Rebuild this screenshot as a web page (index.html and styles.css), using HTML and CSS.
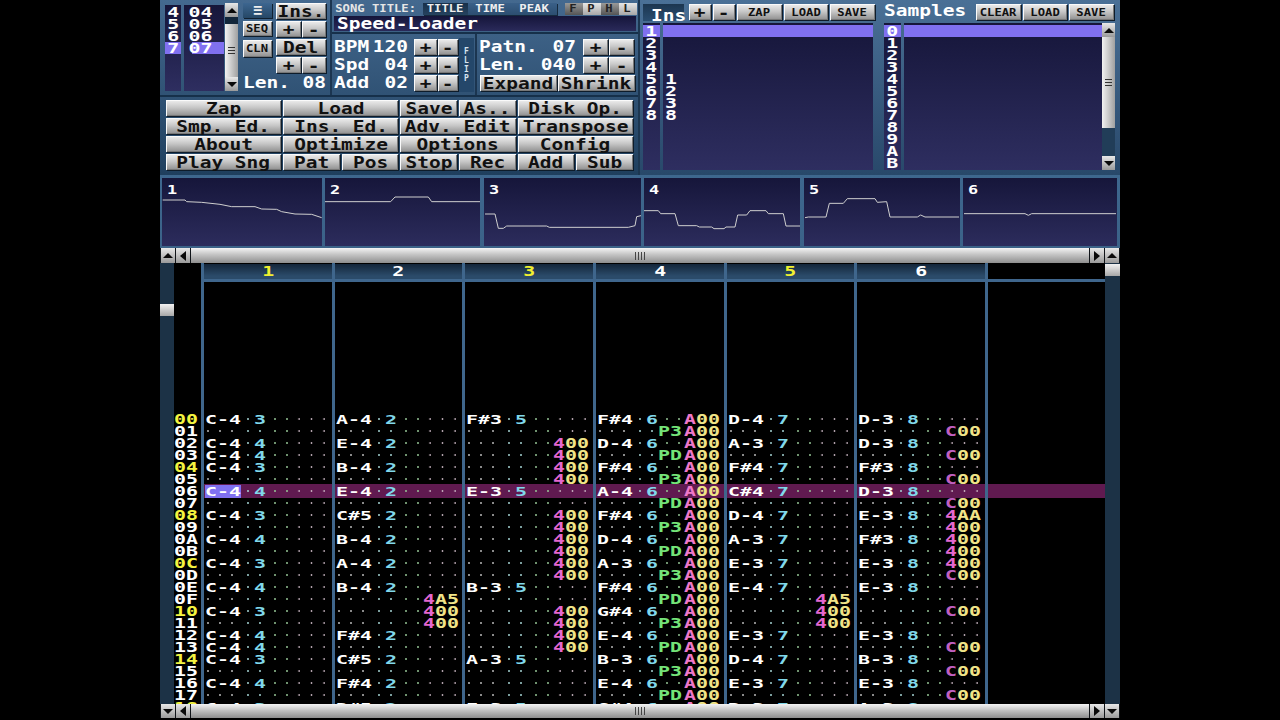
FILE: index.html
```html
<!DOCTYPE html>
<html lang="en">
<head>
<meta charset="utf-8">
<title>Speed-Loader</title>
<link rel="stylesheet" href="styles.css">
</head>
<body>
<div class="stage">
  <div class="top">
    <div class="left">
      <div class="upper">
        <div class="seq">
          <div class="list nums">
            <div class="li"><span class="t">4</span></div>
            <div class="li"><span class="t">5</span></div>
            <div class="li"><span class="t">6</span></div>
            <div class="li sel"><span class="t">7</span></div>
          </div>
          <div class="list names">
            <div class="li"><span class="t">04</span></div>
            <div class="li"><span class="t">05</span></div>
            <div class="li"><span class="t">06</span></div>
            <div class="li sel"><span class="t">07</span></div>
          </div>
          <div class="vbar">
            <div class="arrow"><i class="tri up"></i></div>
            <div class="gap7"></div>
            <div class="thumb"><i class="grip"></i></div>
            <div class="arrow"><i class="tri down"></i></div>
          </div>
          <div class="seqright">
            <div class="seqgrid">
              <div class="seqsmall">
                <div class="bb menu">≡</div>
                <div class="b smallb"><span class="t s">SEQ</span></div>
                <div class="b smallb cln"><span class="t s">CLN</span></div>
              </div>
              <div class="seqins">
                <div class="b"><span class="t">Ins.</span></div>
                <div class="pm"><div class="b"><span class="t">+</span></div><div class="b"><span class="t">-</span></div></div>
                <div class="b"><span class="t">Del</span></div>
                <div class="pm"><div class="b"><span class="t">+</span></div><div class="b"><span class="t">-</span></div></div>
              </div>
            </div>
            <div class="lenrow"><span class="t l lab">Len.</span><span class="t r val">08</span></div>
          </div>
        </div>
        <div class="mid">
          <div class="titlebar">
            <div class="titletop">
              <span class="t s l songlab">SONG TITLE:</span>
              <div class="tab on"><span class="t s">TITLE</span></div>
              <div class="tab"><span class="t s">TIME</span></div>
              <div class="tab"><span class="t s">PEAK</span></div>
              <div class="flags">
                <div class="flag off"><span class="t s">F</span></div>
                <div class="flag"><span class="t s">P</span></div>
                <div class="flag off"><span class="t s">H</span></div>
                <div class="flag"><span class="t s">L</span></div>
              </div>
            </div>
            <div class="titleinput"><span class="t l">Speed-Loader</span></div>
          </div>
          <div class="params">
            <div class="bpm">
              <div class="prow"><span class="t l lab3">BPM</span><span class="t r val3">120</span><div class="pm2"><div class="b"><span class="t">+</span></div><div class="b"><span class="t">-</span></div></div></div>
              <div class="prow"><span class="t l lab3">Spd</span><span class="t r val3">04</span><div class="pm2"><div class="b"><span class="t">+</span></div><div class="b"><span class="t">-</span></div></div></div>
              <div class="prow"><span class="t l lab3">Add</span><span class="t r val3">02</span><div class="pm2"><div class="b"><span class="t">+</span></div><div class="b"><span class="t">-</span></div></div></div>
            </div>
            <div class="flip"><span>F</span><span>L</span><span>I</span><span>P</span></div>
            <div class="patn">
              <div class="prow"><span class="t l lab5">Patn.</span><span class="t r val5">07</span><div class="pm3"><div class="b"><span class="t">+</span></div><div class="b"><span class="t">-</span></div></div></div>
              <div class="prow"><span class="t l lab5">Len.</span><span class="t r val5">040</span><div class="pm3"><div class="b"><span class="t">+</span></div><div class="b"><span class="t">-</span></div></div></div>
              <div class="prow exp"><div class="b"><span class="t">Expand</span></div><div class="b"><span class="t">Shrink</span></div></div>
            </div>
          </div>
        </div>
      </div>
      <div class="transport">
        <div class="b c2"><span class="t">Zap</span></div>
        <div class="b c2"><span class="t">Load</span></div>
        <div class="b"><span class="t">Save</span></div>
        <div class="b"><span class="t">As..</span></div>
        <div class="b c2"><span class="t">Disk Op.</span></div>
        <div class="b c2"><span class="t">Smp. Ed.</span></div>
        <div class="b c2"><span class="t">Ins. Ed.</span></div>
        <div class="b c2"><span class="t">Adv. Edit</span></div>
        <div class="b c2"><span class="t">Transpose</span></div>
        <div class="b c2"><span class="t">About</span></div>
        <div class="b c2"><span class="t">Optimize</span></div>
        <div class="b c2"><span class="t">Options</span></div>
        <div class="b c2"><span class="t">Config</span></div>
        <div class="b c2"><span class="t">Play Sng</span></div>
        <div class="b"><span class="t">Pat</span></div>
        <div class="b"><span class="t">Pos</span></div>
        <div class="b"><span class="t">Stop</span></div>
        <div class="b"><span class="t">Rec</span></div>
        <div class="b"><span class="t">Add</span></div>
        <div class="b"><span class="t">Sub</span></div>
      </div>
    </div>
    <div class="right">
      <div class="bank inst">
        <div class="bankhead">
          <div class="instab"><span class="t l">Ins</span></div>
          <div class="b hb pmw"><span class="t">+</span></div>
          <div class="b hb pmw"><span class="t">-</span></div>
          <div class="b hb txw"><span class="t s">ZAP</span></div>
          <div class="b hb txw"><span class="t s">LOAD</span></div>
          <div class="b hb txw"><span class="t s">SAVE</span></div>
        </div>
        <div class="banklists">
          <div class="list bnum">
            <div class="li sel"><span class="t">1</span></div><div class="li"><span class="t">2</span></div><div class="li"><span class="t">3</span></div><div class="li"><span class="t">4</span></div><div class="li"><span class="t">5</span></div><div class="li"><span class="t">6</span></div><div class="li"><span class="t">7</span></div><div class="li"><span class="t">8</span></div>
          </div>
          <div class="list bname">
            <div class="li sel"></div><div class="li"></div><div class="li"></div><div class="li"></div><div class="li"><span class="t l">1</span></div><div class="li"><span class="t l">2</span></div><div class="li"><span class="t l">3</span></div><div class="li"><span class="t l">8</span></div>
          </div>
        </div>
      </div>
      <div class="bank samp">
        <div class="bankhead">
          <div class="samptitle"><span class="t l">Samples</span></div>
          <div class="b hb txw"><span class="t s">CLEAR</span></div>
          <div class="b hb txw"><span class="t s">LOAD</span></div>
          <div class="b hb txw"><span class="t s">SAVE</span></div>
        </div>
        <div class="banklists">
          <div class="list bnum">
            <div class="li sel"><span class="t">0</span></div><div class="li"><span class="t">1</span></div><div class="li"><span class="t">2</span></div><div class="li"><span class="t">3</span></div><div class="li"><span class="t">4</span></div><div class="li"><span class="t">5</span></div><div class="li"><span class="t">6</span></div><div class="li"><span class="t">7</span></div><div class="li"><span class="t">8</span></div><div class="li"><span class="t">9</span></div><div class="li"><span class="t">A</span></div><div class="li"><span class="t">B</span></div>
          </div>
          <div class="list bname wide"><div class="li sel"></div></div>
          <div class="vbar tall">
            <div class="arrow"><i class="tri up"></i></div>
            <div class="thumb big"><i class="grip"></i></div>
            <div class="gapfill"></div>
            <div class="arrow"><i class="tri down"></i></div>
          </div>
        </div>
      </div>
    </div>
  </div>

  <div class="scopes">
    <div class="scope"><span class="t l sn">1</span><svg class="wave" viewBox="6 9 480 204" preserveAspectRatio="none"><polyline points="8,75 75,75 80,80 125,82 180,88 215,95 285,95 305,102 350,103 365,110 405,117 455,118 485,128"/></svg></div>
    <div class="scope"><span class="t l sn">2</span><svg class="wave" viewBox="498 9 465 204" preserveAspectRatio="none"><polyline points="498,80 695,80 708,66 808,66 818,80 963,80"/></svg></div>
    <div class="scope"><span class="t l sn">3</span><svg class="wave" viewBox="972 9 471 204" preserveAspectRatio="none"><polyline points="975,117 1005,117 1015,160 1030,160 1040,153 1160,153 1168,157 1405,157 1425,152 1430,125 1443,122"/></svg></div>
    <div class="scope"><span class="t l sn">4</span><svg class="wave" viewBox="12 9 468 204" preserveAspectRatio="none"><polyline points="12,107 55,107 62,116 105,116 115,152 170,152 178,156 215,156 222,161 252,161 258,156 285,156 293,120 320,120 330,107 378,107 385,116 430,116 438,153 480,153"/></svg></div>
    <div class="scope"><span class="t l sn">5</span><svg class="wave" viewBox="492 9 468 204" preserveAspectRatio="none"><polyline points="495,128 505,126 558,126 568,85 610,85 622,71 705,71 712,82 740,80 750,126 832,126 842,120 855,126 957,126"/></svg></div>
    <div class="scope"><span class="t l sn">6</span><svg class="wave" viewBox="969 9 462 204" preserveAspectRatio="none"><polyline points="972,116 1155,116 1165,121 1175,116 1428,116"/></svg></div>
  </div>

  <div class="hbar">
    <div class="arrow"><i class="tri up"></i></div>
    <div class="arrow lr"><i class="tri left"></i></div>
    <div class="htrack"><i class="hgrip"></i></div>
    <div class="arrow lr"><i class="tri right"></i></div>
    <div class="arrow"><i class="tri up"></i></div>
  </div>

  <div class="pattern">
    <div class="sidebar lefts"><div class="sthumb"></div></div>
    <div class="grid" id="grid"></div>
    <div class="sidebar rights"><div class="sthumb first"></div></div>
  </div>

  <div class="hbar last">
    <div class="arrow"><i class="tri down"></i></div>
    <div class="arrow lr"><i class="tri left"></i></div>
    <div class="htrack"><i class="hgrip"></i></div>
    <div class="arrow lr"><i class="tri right"></i></div>
    <div class="arrow"><i class="tri down"></i></div>
  </div>
</div>
<script src="pattern.js"></script>
</body>
</html>
```
FILE: styles.css
```css
* { box-sizing: border-box; }
html, body { margin: 0; height: 100%; background: #000; overflow: hidden; }
.stage { width: 960px; height: 720px; margin: 0 auto; display: flex; flex-direction: column; color: #fff; font-family: "DejaVu Sans Mono", "Liberation Mono", monospace; }

/* text: the tracker's pixel font is wide, so a mono face is stretched */
.t { display: inline-block; font: bold 15px/12px "DejaVu Sans Mono", "Liberation Mono", monospace; transform: scaleX(1.3); white-space: pre; }
.t.s { font-size: 10px; line-height: 10px; transform: scaleX(1.22); }
.t.l { transform-origin: 0 50%; }
.t.r { transform-origin: 100% 50%; text-align: right; }

/* buttons */
.b { display: flex; align-items: center; justify-content: center; height: 16px; min-width: 0; padding-top: 1px; color: #111; background: linear-gradient(#efefef, #c9c9c9 45%, #8e8e8e); box-shadow: inset 1px 1px #fafafa, inset -1px -1px #777, 1px 1px #0e1c2a; }

/* top */
.top { height: 175px; display: flex; flex: none; }
.left { width: 480px; display: flex; flex-direction: column; background: linear-gradient(#44698f, #1f3f5e); border-right: 2px solid #1c3650; }
.right { width: 480px; display: flex; background: linear-gradient(#4a7096, #28486a); }
.upper { height: 97px; display: flex; border-bottom: 2px solid #16304a; }

.seq { width: 172px; display: flex; padding: 3px 0 0 5px; border-right: 2px solid #1b3550; }
.list { background: linear-gradient(#16163a, #2e2e60); }
.li { height: 12px; line-height: 12px; font-size: 14px; }
.li .t { font-size: 14px; transform: scaleX(1.42); }
.li.sel { background: #8070f0; }
.nums { width: 16px; height: 86px; margin-top: 2px; padding-top: 1px; text-align: center; }
.names { width: 40px; height: 86px; margin: 2px 1px 0 3px; padding-top: 1px; padding-left: 8px; }
.vbar { display: flex; flex-direction: column; width: 13px; height: 88px; background: #1e3a56; }
.arrow { flex: none; width: 14px; height: 14px; display: flex; align-items: center; justify-content: center; background: linear-gradient(#e8e8e8, #9a9a9a); }
.vbar .arrow { width: 13px; }
.tri { display: block; width: 0; height: 0; border-style: solid; border-color: transparent; }
.tri.up { border-width: 0 5px 5px; border-bottom-color: #0a0a0a; }
.tri.down { border-width: 5px 5px 0; border-top-color: #0a0a0a; }
.tri.left { border-width: 5px 6px 5px 0; border-right-color: #0a0a0a; }
.tri.right { border-width: 5px 0 5px 6px; border-left-color: #0a0a0a; }
.gap7 { height: 7px; flex: none; background: #12263a; }
.thumb { height: 53px; flex: none; display: flex; align-items: center; justify-content: center; background: linear-gradient(90deg, #f2f2f2, #a0a0a0); }
.thumb.big { height: 91px; }
.gapfill { flex: 1; background: #213d58; }
.grip { display: block; width: 7px; height: 7px; background: repeating-linear-gradient(#333 0 1px, transparent 1px 3px); }

.seqright { width: 83px; margin-left: 5px; display: flex; flex-direction: column; }
.seqgrid { display: flex; gap: 4px; height: 72px; }
.seqsmall { width: 29px; display: flex; flex-direction: column; }
.bb.menu { height: 15px; text-align: center; line-height: 15px; font-size: 15px; font-weight: bold; background: linear-gradient(#3d6690, #254766); box-shadow: 1px 1px #102030; color: #eee; margin-bottom: 3px; }
.smallb { height: 15px; margin-bottom: 4px; }
.smallb.cln { height: 17px; }
.seqins { width: 50px; display: flex; flex-direction: column; gap: 2px; }
.pm { display: flex; gap: 1px; }
.pm .b { width: 25px; }
.lenrow { display: flex; justify-content: space-between; height: 16px; align-items: center; }
.lab { width: 40px; }
.val { width: 20px; }

.mid { width: 306px; display: flex; flex-direction: column; }
.titlebar { height: 34px; padding: 3px 0 0 2px; border-bottom: 2px solid #16304a; }
.titletop { display: flex; height: 11px; align-items: center; }
.songlab { width: 89px; padding-left: 1px; color: #e6e6e6; }
.tab { width: 44.5px; height: 12px; display: flex; align-items: center; justify-content: center; background: linear-gradient(#3a6088, #2c4e70); box-shadow: 1px 1px #15293d; color: #eee; }
.tab.on { background: linear-gradient(#18304a, #25425f); }
.flags { display: flex; margin-left: 8px; }
.flag { width: 18px; height: 12px; display: flex; align-items: center; justify-content: center; color: #222; background: linear-gradient(#e6e6e6, #a8a8a8); }
.flag.off { background: linear-gradient(#999, #555); }
.titleinput { margin-top: 2px; width: 302px; height: 15px; padding: 2px 0 0 3px; line-height: 12px; font-size: 14px; background: linear-gradient(#15153a, #2a2a5a); }

.params { flex: 1; display: flex; }
.bpm { width: 127px; padding: 5px 0 0 2px; display: flex; flex-direction: column; gap: 2px; }
.prow { display: flex; height: 16px; align-items: center; }
.lab3 { width: 36px; }
.val3 { width: 38px; }
.pm2 { display: flex; gap: 1px; margin-left: 6px; }
.pm2 .b:first-child { width: 23px; }
.pm2 .b { width: 20px; }
.flip { width: 15px; margin: 4px 0 3px; display: flex; flex-direction: column; align-items: center; justify-content: center; gap: 2px; font-size: 8px; line-height: 7px; font-weight: bold; color: #d8e4f0; background: #24476a; }
.patn { flex: 1; margin-left: 1px; padding: 5px 0 0 2px; display: flex; flex-direction: column; gap: 2px; border-left: 2px solid #1b3550; }
.lab5 { width: 60px; }
.val5 { width: 37px; }
.pm3 { display: flex; gap: 1px; margin-left: 7px; }
.pm3 .b { width: 25px; }
.exp { gap: 1px; padding-left: 1px; }
.exp .b { width: 77px; }

.transport { padding: 3px 0 0 6px; display: grid; grid-template-columns: repeat(8, 56.6px); grid-auto-rows: 16px; gap: 2px; }
.c2 { grid-column: span 2; }

/* right */
.bank { display: flex; flex-direction: column; padding: 3px 0 0 3px; }
.inst { width: 241px; }
.samp { width: 239px; }
.bankhead { height: 18px; display: flex; gap: 2px; align-items: center; }
.instab { width: 41px; height: 17px; padding: 2px 0 0 8px; margin-right: 3px; background: linear-gradient(#1c3650, #2a4d70); }
.samptitle { width: 90px; padding-left: 0; margin-top: -4px; }
.hb { height: 16px; }
.pmw { width: 22px; }
.txw { width: 44.5px; }
.banklists { display: flex; margin-top: 2px; height: 147px; }
.bnum { width: 17px; padding-top: 2px; text-align: center; }
.bname { width: 210px; margin-left: 3px; padding-top: 2px; }
.bname .t.l { margin-left: 2px; }
.bname.wide { width: 198px; }
.vbar.tall { height: 147px; }

/* scopes */
.scopes { height: 73px; flex: none; display: grid; grid-template-columns: 160px 155px 157px 156px 156px 154px; gap: 3.4px; padding: 3px 0 2px 2px; background: linear-gradient(#3e678e, #3b6288); }
.scope { position: relative; background: linear-gradient(#16163a, #2c2c5c); }
.t.sn { position: absolute; left: 5px; top: 6px; font-size: 13px; transform: scaleX(1.3); }
.wave { position: absolute; left: 0; top: 0; width: 100%; height: 100%; }
.wave polyline { fill: none; stroke: #cfcfcf; stroke-width: 3; }

/* horizontal bars */
.hbar { height: 15px; flex: none; display: flex; background: #101418; }
.hbar .arrow { height: 15px; width: 14px; margin: 0 1px 0 1px; }
.hbar .lr { margin: 0; }
.htrack { flex: 1; margin: 0 1px; display: flex; align-items: center; justify-content: center; background: linear-gradient(#f4f4f4, #c8c8c8 40%, #8e8e8e); }
.hgrip { display: block; width: 11px; height: 8px; background: repeating-linear-gradient(90deg, #444 0 1px, transparent 1px 3px); }
.hbar.last { height: 14px; margin-bottom: 2px; }
.hbar.last .arrow { height: 14px; }

/* pattern */
.pattern { height: 441px; flex: none; display: flex; overflow: hidden; background: #000; }
.sidebar { flex: none; width: 14px; background: #1c3246; }
.rights { width: 15px; }
.sthumb { height: 12px; margin-top: 41px; background: linear-gradient(#f2f2f2, #a8a8a8); }
.sthumb.first { margin-top: 1px; }
.grid { flex: 1; display: flex; min-width: 0; }
.col { flex: none; width: 130.67px; border-left: 3px solid #3f668c; }
.col.numcol { width: 27px; border: 0; }
.col.rest { flex: 1; }
.head { height: 18px; margin-top: 1px; text-align: center; font-size: 14px; line-height: 12px; padding-top: 1px; background: linear-gradient(#14263a, #2b4b6a 80%); border-bottom: 3px solid #3f668c; }
.head .t { font-size: 14px; transform: scaleX(1.42); }
.head.odd .t { color: #f0f030; }
.rest .head { background: #000; }
.numcol .head { background: none; border: 0; }
.body { padding-top: 131px; }
.cell { height: 12px; display: flex; padding-left: 1px; font-size: 14px; line-height: 12px; }
.cell.hl { background: #601a50; box-shadow: 0 -1px #601a50, 0 1px #601a50; }
.numcol .cell { padding-left: 0; }
.num.y .t { color: #f4f440; }
.note, .ins, .vol, .fx { display: block; height: 12px; }
.note { width: 36px; }
.ins { width: 25px; }
.ins .t { margin-left: 13px; }
.vol { width: 25px; }
.fx { width: 37px; margin-left: 1px; }
.cur { background: #8070f0; box-shadow: 0 1px #8070f0; }
.d { background-image: radial-gradient(circle at 3px 6px, #bdbdbd .6px, transparent 1px); background-size: 12px 12px; background-repeat: repeat-x; }
.ins.d { background-image: radial-gradient(circle at 7px 6px, #a8d8d8 .6px, transparent 1px); }
.ins.one { background-repeat: no-repeat; }
.vol.d { background-image: radial-gradient(circle at 9px 6px, #98c898 .6px, transparent 1px); }
.fx.d { background-image: radial-gradient(circle at 7px 6px, #d4c0cc .6px, transparent 1px); background-size: 12.5px 12px; }
.note .t, .ins .t { font-size: 13px; transform-origin: 0 50%; transform: scaleX(1.53); }
.vol .t, .fx .t, .num .t { font-size: 14px; transform-origin: 0 50%; transform: scaleX(1.42); }
.ins .t { color: #80d8ea; }
.vol .t { color: #74e478; }
.fx .t b { font-weight: bold; color: #f0e488; }
.fx .t { color: #e468cf; }
.fx .t.cc { color: #c060c0; }
.fx .t.aa { color: #ee78c8; }
```
FILE: pattern.js
```js
// Pattern data, one string per channel: note+instrument, then volume column, then effect.
var channels = [
  'C-43,,C-44,C-44,C-43,,C-44,,C-43,,C-44,,C-43,,C-44,,C-43,,C-44,C-44,C-43,,C-44,,C-43',
  'A-42,,E-42,,B-42,,E-42,,C#52,,B-42,,A-42,,B-42,4A5,400,400,F#42,,C#52,,F#42,,D#52',
  'F#35,,400,400,400,400,E-35,,400,400,400,400,400,400,B-35,,400,400,400,400,A-35,,,,F-35',
  'F#46A00,P3A00,D-46A00,PDA00,F#46A00,P3A00,A-46A00,PDA00,F#46A00,P3A00,D-46A00,PDA00,A-36A00,P3A00,F#46A00,PDA00,G#46A00,P3A00,E-46A00,PDA00,B-36A00,P3A00,E-46A00,PDA00,G#46A00',
  'D-47,,A-37,,F#47,,C#47,,D-47,,A-37,,E-37,,E-47,4A5,400,400,E-37,,D-47,,E-37,,B-37',
  'D-38,C00,D-38,C00,F#38,C00,D-38,C00,E-384AA,400,F#38400,400,E-38400,C00,E-38,,C00,,E-38,C00,B-38,C00,E-38,C00,A-38'
];
var ROWS = 25, HL = 6;

function text(s, cls) { return '<span class="t' + (cls ? ' ' + cls : '') + '">' + s + '</span>'; }

function cell(src, row) {
  var note = '', ins = '', vol = '', fx = '', s = src;
  if (s.length >= 4 && (s[1] === '-' || s[1] === '#')) { note = s.slice(0, 3); ins = s[3]; s = s.slice(4); }
  if (s[0] === 'P') { vol = s.slice(0, 2); s = s.slice(2); }
  fx = s;
  var html = '<div class="' + (row === HL ? 'cell hl' : 'cell') + '">';
  html += note ? '<span class="note">' + text(note) + '</span>' : '<span class="note d"></span>';
  html += ins ? '<span class="ins d one">' + text(ins) + '</span>' : '<span class="ins d"></span>';
  html += vol ? '<span class="vol">' + text(vol) + '</span>' : '<span class="vol d"></span>';
  if (fx) {
    var c = fx[0] === 'C' ? 'cc' : fx[0] === 'A' ? 'aa' : '';
    html += '<span class="fx">' + text(fx[0] + '<b>' + fx.slice(1) + '</b>', c) + '</span>';
  } else {
    html += '<span class="fx d"></span>';
  }
  return html + '</div>';
}

var html = '<div class="col numcol"><div class="head"></div><div class="body">';
for (var r = 0; r < ROWS; r++) {
  var hex = (r < 16 ? '0' : '') + r.toString(16).toUpperCase();
  html += '<div class="cell num' + (r % 4 === 0 ? ' y' : '') + '">' + text(hex) + '</div>';
}
html += '</div></div>';
channels = channels.map(function (c) { return c.split(','); });
channels.forEach(function (ch, i) {
  html += '<div class="col"><div class="head' + (i % 2 === 0 ? ' odd' : '') + '">' + text(String(i + 1)) + '</div><div class="body">';
  for (var r = 0; r < ROWS; r++) html += cell(ch[r] || '', r);
  html += '</div></div>';
});
html += '<div class="col rest"><div class="head"></div><div class="body">';
for (var r = 0; r < ROWS; r++) html += '<div class="' + (r === HL ? 'cell hl' : 'cell') + '"></div>';
html += '</div></div>';
document.getElementById('grid').innerHTML = html;
// the edit cursor sits on channel 1 of the highlighted row
document.querySelector('.col:nth-child(2) .cell.hl .note').classList.add('cur');
```
